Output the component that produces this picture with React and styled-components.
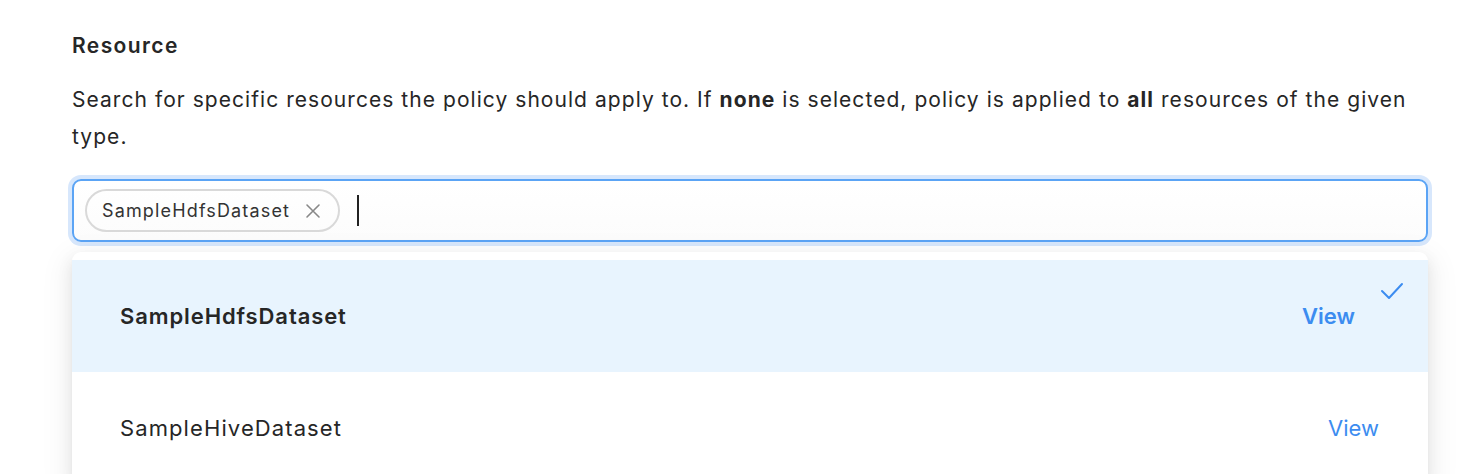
import React from "react";
import styled, { createGlobalStyle } from "styled-components";

const Global = createGlobalStyle`
  html, body { margin: 0; padding: 0; background: #fff; }
  body { font-family: Inter, "Noto Sans", sans-serif; color: #262626; overflow: hidden; }
`;

const Page = styled.div`
  padding: 30px 56px 0 72px;
`;

const Label = styled.div`
  font-size: 21px;
  font-weight: 600;
  line-height: 32px;
  letter-spacing: 1.4px;
  color: #262626;
  margin-bottom: 19px;
`;

const Description = styled.p`
  margin: 0 0 24px 0;
  font-size: 21px;
  line-height: 37px;
  letter-spacing: 1.05px;
  color: #262626;
  b { font-weight: 700; }
`;

const SelectBox = styled.div`
  display: flex;
  align-items: center;
  gap: 17px;
  height: 63px;
  box-sizing: border-box;
  border: 2px solid #5ba4f5;
  border-radius: 9px;
  box-shadow: 0 0 0 4px #d7e7fc;
  padding: 0 11px;
  background: linear-gradient(#fff, #fcfcfc);
`;

const Chip = styled.span`
  display: inline-flex;
  align-items: center;
  gap: 15px;
  height: 43px;
  box-sizing: border-box;
  padding: 0 17px 0 15px;
  border: 2px solid #d9d9d9;
  border-radius: 22px;
  font-size: 18px;
  letter-spacing: 1.15px;
  color: #333;
`;

const Caret = styled.span`
  width: 2px;
  height: 31px;
  background: #222;
`;

const Dropdown = styled.div`
  margin-top: 10px;
  padding-top: 8px;
  background: #fff;
  border-radius: 9px;
  box-shadow: 0 6px 16px rgba(0, 0, 0, 0.08), 0 3px 6px -4px rgba(0, 0, 0, 0.12),
    0 9px 28px 8px rgba(0, 0, 0, 0.05);
  overflow: hidden;
`;

const Option = styled.div`
  position: relative;
  display: flex;
  align-items: center;
  justify-content: space-between;
  height: 112px;
  padding: 0 ${(p) => (p.$selected ? "73px" : "49px")} 0 48px;
  background: ${(p) => (p.$selected ? "#e8f4fe" : "#fff")};
  font-size: 22px;
  font-weight: ${(p) => (p.$selected ? 600 : 400)};
  letter-spacing: ${(p) => (p.$selected ? "0.9px" : "1.1px")};
  color: #262626;
`;

const ViewLink = styled.span`
  color: #3c8cf0;
  font-size: 22px;
  letter-spacing: 0;
`;

const Check = styled.svg`
  position: absolute;
  right: 24px;
  top: 22px;
`;

export default function App() {
  return (
    <>
      <Global />
      <Page>
        <Label>Resource</Label>
        <Description>
          Search for specific resources the policy should apply to. If <b>none</b> is selected,
          policy is applied to <b>all</b> resources of the given type.
        </Description>
        <SelectBox>
          <Chip>
            SampleHdfsDataset
            <svg width="16" height="16" viewBox="0 0 16 16">
              <path d="M2 2L14 14M14 2L2 14" stroke="#888" strokeWidth="1.6" strokeLinecap="round" />
            </svg>
          </Chip>
          <Caret />
        </SelectBox>
        <Dropdown>
          <Option $selected>
            SampleHdfsDataset
            <ViewLink>View</ViewLink>
            <Check width="24" height="18" viewBox="0 0 24 18">
              <path d="M2 9L9 16L22 2" fill="none" stroke="#3c8cf0" strokeWidth="2" strokeLinecap="round" strokeLinejoin="round" />
            </Check>
          </Option>
          <Option>
            SampleHiveDataset
            <ViewLink>View</ViewLink>
          </Option>
        </Dropdown>
      </Page>
    </>
  );
}
